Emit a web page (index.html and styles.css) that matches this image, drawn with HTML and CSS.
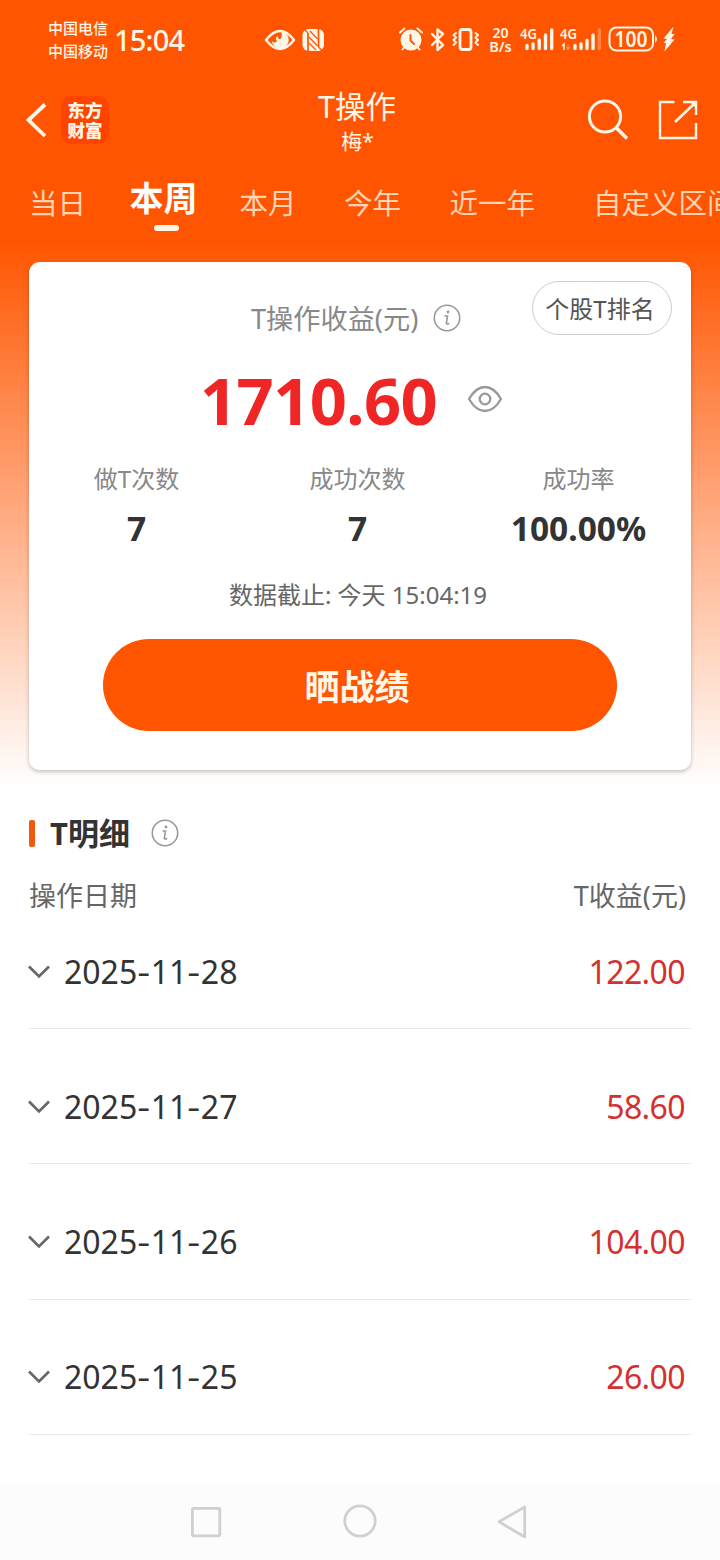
FILE: index.html
```html
<!DOCTYPE html>
<html lang="zh-CN">
<head>
<meta charset="utf-8">
<title>T操作</title>
<link rel="stylesheet" href="styles.css">
</head>
<body>
<div class="screen">
  <div class="status">
    <div class="carrier"><span>中国电信</span><span>中国移动</span></div>
    <div class="clock">15:04</div>
    <svg class="status-left" width="62" height="30" viewBox="264 25 62 30">
      <path d="M266 40Q280 22 294 40Q280 58 266 40Z" fill="none" stroke="#fff6e8" stroke-width="2.4" stroke-linejoin="round"/>
      <path d="M281 31.500A8.500 8.500 0 1 1 271.800 41Q274 43.500 277 41.500Q274.500 38 277.500 36Q278 39.500 280.500 39Q283 35 281 31.500Z" fill="#fff6e8"/>
      <rect x="302.500" y="29" width="21.500" height="22" rx="6" fill="#fff6e8"/>
      <path d="M308 51V33M318.500 29V47" fill="none" stroke="#ff5500" stroke-width="1.700"/>
      <path d="M308 33L304.500 29.500M318.500 47L322 50.500M310 31L317.500 39M309 37L317.500 46M309 43L316 50" fill="none" stroke="#ff5500" stroke-width="1.200"/>
    </svg>
    <svg class="status-right" width="284" height="34" viewBox="396 24 284 34">
      <g fill="none" stroke="#fff6e8" stroke-width="2.400" stroke-linecap="round" stroke-linejoin="round">
        <circle cx="411" cy="41" r="9.300" fill="#fff6e8"/>
        <path d="M400 33.500L404.500 29.500M417.500 29.500L422 33.500M404.500 48L402.500 50.500M417.500 48L419.500 50.500" stroke-width="2"/>
        <path d="M410.500 36V41.500L414 45" stroke="#ff5500" stroke-width="1.900"/>
        <path d="M432 35L443 46L437.500 51V30.500L443 35L432 46"/>
        <rect x="460" y="30.500" width="11" height="20" rx="2.500" stroke-width="2.800"/>
        <path d="M456 34L453.500 36L456 38.500L453.500 41L456 43.500L453.500 46M475.500 34L478 36L475.500 38.500L478 41L475.500 43.500L478 46" stroke-width="2"/>
      </g>
      <g class="status-text">
        <text x="500.500" y="38.500" font-size="14" text-anchor="middle">20</text>
        <text x="500.500" y="53" font-size="14.500" text-anchor="middle">B/s</text>
        <text x="520" y="40" font-size="15" textLength="17" lengthAdjust="spacingAndGlyphs">4G</text>
        <text x="560" y="40" font-size="15" textLength="17" lengthAdjust="spacingAndGlyphs">4G</text>
        <text x="631" y="48" font-size="21" text-anchor="middle" textLength="33" lengthAdjust="spacingAndGlyphs">100</text>
      </g>
      <g stroke="#fff6e8" stroke-width="3.400" stroke-linecap="round">
        <path d="M527 46.500V49.500M533 45V49.500M539.200 41V49.500M545.500 36V49.500M551.700 31V49.500M575 46.500V49.500M581 45V49.500M587 41.500V49.500M593 36V49.500"/>
        <path d="M599.300 31V49.500" opacity=".3"/>
      </g>
      <path d="M562 47L564 45V51" fill="none" stroke="#fff6e8" stroke-width="1.500"/>
      <path d="M568 45V51M566.500 48L568 50.500L570 48" fill="none" stroke="#fff6e8" stroke-width="1.200" opacity=".4"/>
      <rect x="609.500" y="28.500" width="43.500" height="23" rx="7" fill="none" stroke="#fff6e8" stroke-width="2"/>
      <path d="M655 36Q659 40 655 44Z" fill="#fff6e8"/>
      <path d="M673.500 27.500L663.500 39.500L667 40L663.500 44L666 44L664.500 52.500L674.500 40.500L671 40L674.500 35L671.500 35Z" fill="#fff6e8"/>
    </svg>
  </div>

  <header class="header">
    <svg class="back" width="24" height="38" viewBox="24 101 24 38"><path d="M45 104.500L28.500 120L45 136" fill="none" stroke="#fff6e8" stroke-width="3.800"/></svg>
    <div class="logo"><span>东方</span><span>财富</span></div>
    <div class="title"><h1>T操作</h1><p>梅*</p></div>
    <svg class="tools" width="114" height="44" viewBox="586 98 114 44">
      <g fill="none" stroke="#fff6e8">
        <circle cx="605" cy="116.500" r="15.600" stroke-width="3"/>
        <path d="M616 127.500L627 138.500" stroke-width="3.600"/>
        <path d="M674.500 102H660V138H696V123M683 102H696V115" stroke-width="2.400"/>
        <path d="M675 122L695 103" stroke-width="2.600"/>
        <path d="M690 102H696V108Z" fill="#fff6e8" stroke="none"/>
      </g>
    </svg>
  </header>

  <nav class="tabs">
    <span>当日</span><span class="active">本周</span><span>本月</span><span>今年</span><span>近一年</span><span>自定义区间</span>
  </nav>

  <section class="card">
    <div class="card-head">
      <span class="label">T操作收益(元)</span>
      <svg class="info" width="28" height="28" viewBox="0 0 28 28"><circle cx="14" cy="14" r="12.700"/><path d="M11.500 12H14.500L13.300 19.500Q13.500 20.500 16.200 19.500"/><circle class="dot" cx="15" cy="8" r="1.400"/></svg>
      <button class="rank">个股T排名</button>
    </div>
    <div class="amount">
      <strong>1710.60</strong>
      <svg width="36" height="28" viewBox="0 0 36 28" fill="none" stroke="#999" stroke-width="2.300"><path d="M2 14Q9 2 18 2T34 14Q27 26 18 26T2 14Z" stroke-linejoin="round"/><circle cx="18" cy="14" r="5.300"/></svg>
    </div>
    <div class="stats">
      <div><span>做T次数</span><b>7</b></div>
      <div><span>成功次数</span><b>7</b></div>
      <div><span>成功率</span><b>100.00%</b></div>
    </div>
    <p class="asof">数据截止: 今天 15:04:19</p>
    <button class="share">晒战绩</button>
  </section>

  <section class="detail">
    <div class="detail-title">
      <i></i><h2>T明细</h2>
      <svg class="info" width="28" height="28" viewBox="0 0 28 28"><circle cx="14" cy="14" r="12.700"/><path d="M11.500 12H14.500L13.300 19.500Q13.500 20.500 16.200 19.500"/><circle class="dot" cx="15" cy="8" r="1.400"/></svg>
    </div>
    <div class="columns"><span>操作日期</span><span>T收益(元)</span></div>
    <div class="list">
      <div class="row"><svg width="24" height="16" viewBox="0 0 24 16"><path d="M2 2.500L12 12.500L22 2.500"/></svg><span class="date">2025<em>-</em>11<em>-</em>28</span><span class="gain">122.00</span></div>
      <div class="row"><svg width="24" height="16" viewBox="0 0 24 16"><path d="M2 2.500L12 12.500L22 2.500"/></svg><span class="date">2025<em>-</em>11<em>-</em>27</span><span class="gain">58.60</span></div>
      <div class="row"><svg width="24" height="16" viewBox="0 0 24 16"><path d="M2 2.500L12 12.500L22 2.500"/></svg><span class="date">2025<em>-</em>11<em>-</em>26</span><span class="gain">104.00</span></div>
      <div class="row"><svg width="24" height="16" viewBox="0 0 24 16"><path d="M2 2.500L12 12.500L22 2.500"/></svg><span class="date">2025<em>-</em>11<em>-</em>25</span><span class="gain">26.00</span></div>
    </div>
  </section>

  <footer class="navbar">
    <svg width="340" height="40" viewBox="190 1502 340 40" fill="none" stroke="#d0d0d0" stroke-width="2.800" stroke-linejoin="round">
      <rect x="192.400" y="1508.400" width="27.400" height="27.400" rx="1"/>
      <circle cx="360" cy="1521" r="15.200"/>
      <path d="M499 1521.800L524.700 1507V1537Z"/>
    </svg>
  </footer>
</div>
</body>
</html>
```
FILE: styles.css
```css
* { box-sizing: border-box; margin: 0; padding: 0; }
body { width: 720px; height: 1560px; overflow: hidden; background: #fff; }
.screen {
  width: 720px; height: 1560px; display: flex; flex-direction: column; overflow: hidden;
  font-family: "Noto Sans", "Noto Sans CJK SC", sans-serif; color: #333; white-space: nowrap;
  background: linear-gradient(#ff5500 0, #ff5500 240px, #fff 786px, #fff 100%);
}
svg { display: block; flex: none; }
button { font-family: inherit; border: 0; }

.status { height: 80px; display: flex; align-items: center; padding-left: 48px; color: #fff6e8; }
.carrier { width: 66px; display: flex; flex-direction: column; font-size: 15px; line-height: 23px; font-weight: 500; }
.clock { width: 150px; font-size: 29px; line-height: 40px; font-weight: 500; letter-spacing: -.8px; }
.status-right { margin-left: 70px; }
.status-text { fill: #fff6e8; font-weight: 600; }

.header { height: 80px; display: flex; align-items: center; padding-left: 24px; color: #fff6e8; }
.logo {
  width: 48px; height: 48px; margin-left: 13px; border-radius: 10px; background: #ff4400;
  display: flex; flex-direction: column; align-items: center; justify-content: center;
  font: 900 17.500px/20px "Noto Sans CJK SC", sans-serif;
}
.title { width: 300px; margin-left: 98px; text-align: center; }
.title h1 { font-size: 30.500px; line-height: 40px; font-weight: 400; }
.title p { font-size: 21px; line-height: 28px; padding: 1px 0 0 1px; }
.tools { margin-left: 79px; }

.tabs { height: 102px; padding: 22px 0 0 29px; display: flex; overflow: hidden; color: #ffd4b4; font-size: 28.500px; line-height: 42px; }
.tabs span { flex: none; margin-right: 47.500px; }
.tabs .active {
  display: flex; flex-direction: column; align-items: center;
  width: 68px; margin: -5px 42px 0 -4px; color: #fff; font-size: 34px; font-weight: 700;
}
.tabs .active::after { content: ""; width: 25px; height: 6px; margin: 6px 0 0 6px; border-radius: 3px; background: #fff6e8; }
.tabs span:nth-child(5) { margin: 0 58px 0 1px; }

.card { width: 662px; height: 508px; margin-left: 29px; border-radius: 11px; background: #fff; box-shadow: 0 2px 4px rgba(0,0,0,.22); }
.card-head { height: 93px; padding: 19px 19px 0 222px; display: flex; align-items: flex-start; }
.label { width: 182px; margin-top: 18px; font-size: 27.200px; line-height: 40px; color: #888; }
.info { fill: none; stroke: #999; stroke-width: 1.600; }
.card-head .info { margin-top: 23px; }
.info .dot { fill: #999; stroke: none; }
.rank { width: 140px; height: 54px; margin-left: auto; padding: 0 4px 2px 0; border: 1px solid #ccc; border-radius: 27px; background: #fff; color: #555; font-size: 24px; }
.amount { height: 90px; display: flex; align-items: center; padding-left: 171px; }
.amount strong { width: 267px; font-size: 65px; line-height: 90px; color: #f02525; letter-spacing: -.6px; }
.amount svg { margin-bottom: 2px; }
.stats { height: 112px; display: grid; grid-template-columns: repeat(3, 221px); margin-left: -3px; padding-top: 16px; }
.stats div { display: flex; flex-direction: column; align-items: center; }
.stats span { font-size: 24px; line-height: 36px; color: #888; }
.stats b { font-size: 33.500px; line-height: 44px; margin-top: 9px; }
.asof { padding: 20px 4px 0 0; text-align: center; font-size: 24px; line-height: 36px; color: #666; }
.share { display: block; width: 514px; height: 92px; margin: 26px 0 0 74px; padding: 0 6px 2px 0; border-radius: 46px; background: #ff5500; color: #fff6e8; font-size: 35px; font-weight: 700; }

.detail { flex: 1; padding: 39px 29px 0; }
.detail-title { height: 48px; display: flex; align-items: center; }
.detail-title i { width: 6px; height: 27px; border-radius: 2px; background: #f15a0c; }
.detail-title h2 { width: 101px; margin: 0 0 0 15px; font-size: 31px; line-height: 46px; }
.columns { display: flex; justify-content: space-between; padding: 19px 5px 0 0; font-size: 27px; line-height: 40px; color: #666; }
.list { display: grid; grid-auto-rows: 112px; row-gap: 23.330px; margin-top: 1px; }
.row { display: flex; align-items: center; border-bottom: 1px solid #eaeaea; font-size: 32px; line-height: 44px; padding: 0 6px 2px 0; }
.row svg { margin-left: -2px; fill: none; stroke: #666; stroke-width: 2.600; }
.date { margin-left: 13px; }
.date em { display: inline-block; width: 13.500px; text-align: center; font-style: normal; transform: scaleX(1.250); }
.gain { margin-left: auto; color: #d43030; letter-spacing: -.6px; }

.navbar { height: 77px; background: #fcfcfc; display: flex; align-items: center; justify-content: center; }
```
